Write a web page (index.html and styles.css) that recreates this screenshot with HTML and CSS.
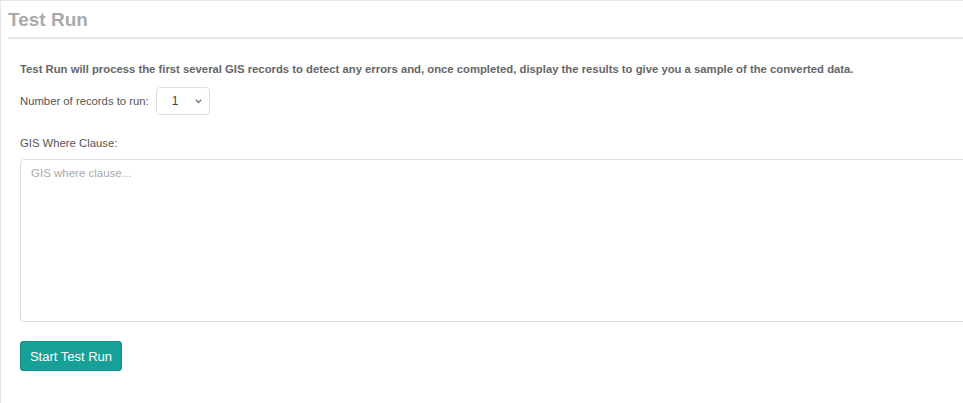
FILE: index.html
```html
<!DOCTYPE html>
<html lang="en">
  <head>
    <meta charset="UTF-8" />
    <meta name="viewport" content="width=device-width, initial-scale=1.0" />
    <title>Test Run</title>
    <link rel="stylesheet" href="styles.css">
  </head>
  <body>
    <div class="panel">
      <h2 class="panel-title">Test Run</h2>

      <div class="panel-body">
        <p class="intro">
          Test Run will process the first several GIS records to detect any errors and, once completed, display the results to give you a sample of the converted data.
        </p>

        <div class="form-row">
          <label for="recordCount">Number of records to run:</label>
          <span class="select-wrap">
            <select id="recordCount" name="recordCount">
              <option value="1">1</option>
              <option value="5">5</option>
              <option value="10">10</option>
            </select>
            <svg class="chevron" width="7" height="5" viewBox="0 0 7 5">
              <path d="M0.8 0.8 L3.5 3.6 L6.2 0.8" fill="none" stroke="#777" stroke-width="1.4" />
            </svg>
          </span>
        </div>

        <div class="form-group">
          <label for="whereClause">GIS Where Clause:</label>
          <textarea id="whereClause" name="whereClause" placeholder="GIS where clause..."></textarea>
        </div>

        <button type="button" id="startBtn">Start Test Run</button>
      </div>
    </div>
  </body>
</html>
```

FILE: styles.css
```css
body {
  font-family: "Liberation Sans", Arial, sans-serif;
  margin: 0;
  background: white;
  color: #555;
}
.panel {
  border-top: 1px solid #e6e6e6;
  border-left: 1px solid #e6e6e6;
  padding-left: 7px;
  height: 402px;
}
.panel-title {
  margin: 0;
  padding: 8px 0 6px;
  font-size: 19px;
  line-height: 22px;
  font-weight: bold;
  color: #aaa;
  border-bottom: 2px solid #e6e6e6;
}
.panel-body {
  padding: 0 0 0 12px;
}
.intro {
  margin: 23px 0 11px;
  font-size: 11.3px;
  line-height: 14px;
  font-weight: bold;
  color: #666;
}
.form-row {
  display: flex;
  align-items: center;
  gap: 7px;
  margin-bottom: 22px;
}
label {
  font-size: 11.3px;
  line-height: 13px;
  color: #555;
}
.select-wrap {
  position: relative;
  display: inline-block;
}
select {
  appearance: none;
  -webkit-appearance: none;
  display: block;
  width: 54px;
  height: 28px;
  padding: 0 6px 0 15px;
  border: 1px solid #ddd;
  border-radius: 4px;
  background: white;
  font-family: inherit;
  font-size: 12px;
  color: #444;
}
.chevron {
  position: absolute;
  right: 8px;
  top: 12px;
  pointer-events: none;
}
.form-group label {
  display: block;
  margin-bottom: 9px;
}
textarea {
  display: block;
  box-sizing: border-box;
  width: 960px;
  height: 163px;
  padding: 7px 10px;
  border: 1px solid #ddd;
  border-radius: 4px;
  font-family: inherit;
  font-size: 11.5px;
  resize: none;
}
textarea::placeholder {
  color: #aaa;
}
button {
  margin-top: 19px;
  width: 102px;
  height: 30px;
  background-color: #17a096;
  color: white;
  border: 1px solid #149086;
  border-radius: 3px;
  font-family: inherit;
  font-size: 13px;
  cursor: pointer;
}
button:hover {
  background-color: #128a81;
}
```
